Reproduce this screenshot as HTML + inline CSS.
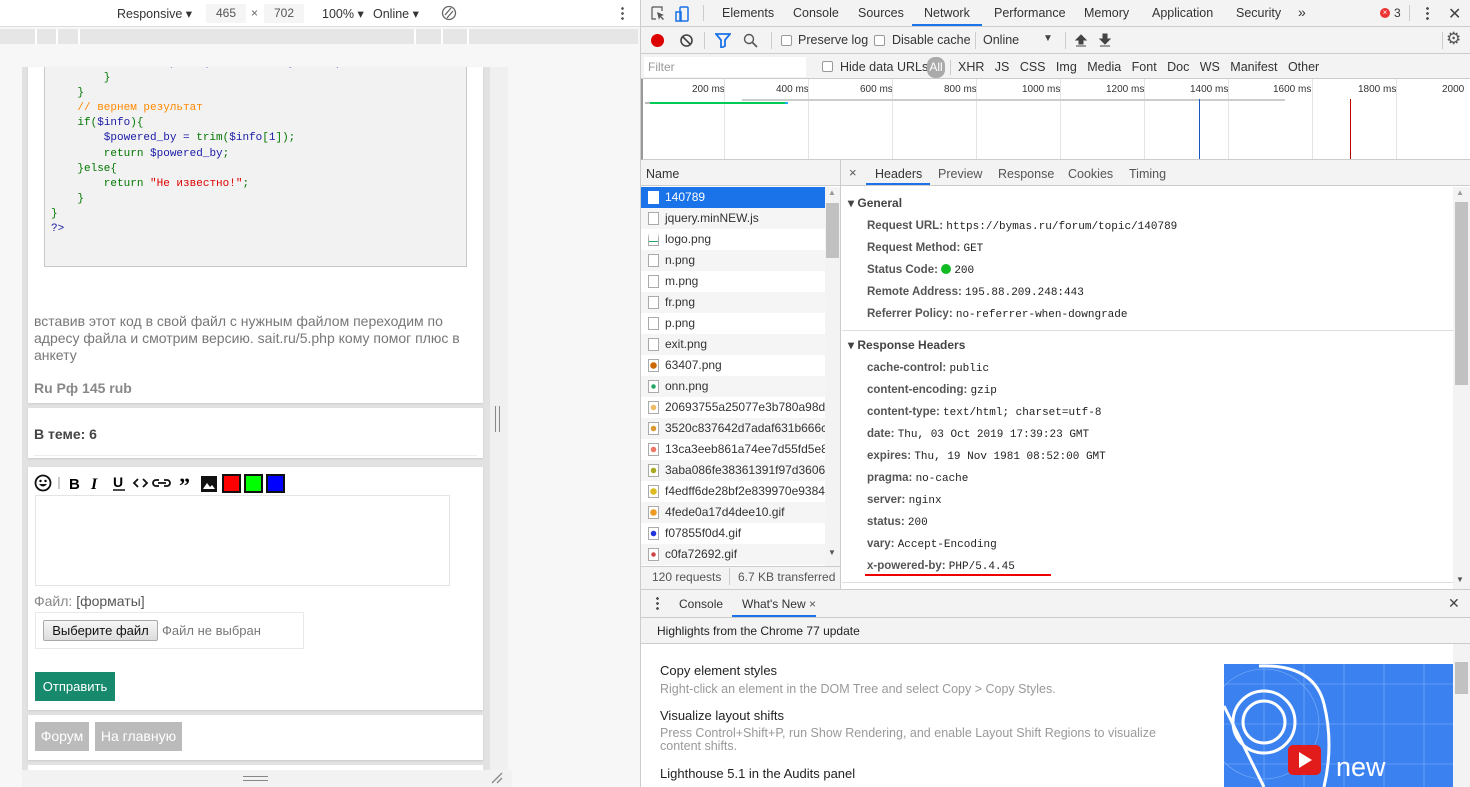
<!DOCTYPE html>
<html><head><meta charset="utf-8"><style>
*{box-sizing:border-box;margin:0;padding:0}
body{width:1470px;height:787px;overflow:hidden;position:relative;font-family:"Liberation Sans","Noto Sans CJK SC",sans-serif;font-size:12px;color:#333;background:#fff}
.a{position:absolute;white-space:nowrap}
.m{font-family:"Liberation Mono",monospace}
.row{position:absolute;left:641px;width:184px;height:21px;line-height:21px;padding-left:24px;font-size:12px;color:#333}
.row i{position:absolute;left:7px;top:4px;width:11px;height:13px;border:1px solid #aaa;background:#fff}
.hd{position:absolute;left:867px;font-size:11.5px;color:#444;white-space:nowrap}
.hd b{color:#555;font-weight:bold}
.hd span{font-family:"Liberation Mono",monospace;color:#222;font-size:11px}
</style></head><body>
<!-- LEFT PANE -->
<div class="a" style="left:0;top:0;width:640px;height:787px;background:#f7f7f7"></div>
<div class="a" style="left:0;top:0;width:640px;height:27px;background:#fff;border-bottom:1px solid #ddd"></div>
<div class="a" style="left:117px;top:6px;font-size:12.5px;color:#333">Responsive ▾</div>
<div class="a" style="left:206px;top:4px;width:40px;height:19px;background:#f5f5f5;text-align:center;line-height:19px;color:#555">465</div>
<div class="a" style="left:251px;top:6px;color:#666">×</div>
<div class="a" style="left:264px;top:4px;width:40px;height:19px;background:#f5f5f5;text-align:center;line-height:19px;color:#555">702</div>
<div class="a" style="left:322px;top:6px;font-size:12.5px">100% ▾</div>
<div class="a" style="left:373px;top:6px;font-size:12.5px">Online ▾</div>
<svg class="a" style="left:441px;top:5px" width="16" height="16"><circle cx="8" cy="8" r="6.5" fill="none" stroke="#666" stroke-width="1.3"/><path d="M4 10 L10 3 M6 13 L12 6" stroke="#666" stroke-width="1.3"/></svg>
<div class="a" style="left:621px;top:6px;width:3px;height:15px;background:radial-gradient(circle,#666 1.3px,transparent 1.5px) 0 0/3px 5px"></div>
<div class="a" style="left:0;top:29px;width:638px;height:15px;background:#e6e6e6"></div>
<div class="a" style="left:35px;top:29px;width:2px;height:15px;background:#fff"></div>
<div class="a" style="left:56px;top:29px;width:2px;height:15px;background:#fff"></div>
<div class="a" style="left:78px;top:29px;width:2px;height:15px;background:#fff"></div>
<div class="a" style="left:414px;top:29px;width:2px;height:15px;background:#fff"></div>
<div class="a" style="left:441px;top:29px;width:2px;height:15px;background:#fff"></div>
<div class="a" style="left:467px;top:29px;width:2px;height:15px;background:#fff"></div>
<!-- device frame -->
<div class="a" style="left:22px;top:67px;width:468px;height:703px;background:#e2e2e2"></div>
<div class="a" style="left:490px;top:67px;width:18px;height:703px;background:#f0f0f0"></div>
<div class="a" style="left:28px;top:67px;width:455px;height:336px;background:#fff;box-shadow:0 1px 2px #ccc"></div>
<div class="a" style="left:44px;top:67px;width:423px;height:200px;background:#f2f2f2;border:1px solid #c8c8c8;border-top:none;overflow:hidden">
<div class="a m" style="left:6px;top:-11px;font-size:11px;line-height:15.1px;color:#1a1aa6;white-space:pre"><span style="color:#1a1aa6">        $info = explode("X-Powered-By: ",$v);</span>
<span style="color:#070">        }</span>
<span style="color:#070">    }</span>
<span style="color:#f80">    // вернем результат</span>
<span style="color:#070">    if(</span>$info<span style="color:#070">){</span>
        $powered_by = <span style="color:#070">trim(</span>$info<span style="color:#070">[</span>1<span style="color:#070">]);</span>
<span style="color:#070">        return </span>$powered_by<span style="color:#070">;</span>
<span style="color:#070">    }else{</span>
<span style="color:#070">        return </span><span style="color:#d00">"Не известно!"</span><span style="color:#070">;</span>
<span style="color:#070">    }</span>
<span style="color:#070">}</span>
?&gt;</div></div>
<div class="a" style="left:34px;top:313px;font-size:14px;line-height:17px;color:#777;white-space:normal;width:440px">вставив этот код в свой файл с нужным файлом переходим по адресу файла и смотрим версию. sait.ru/5.php кому помог плюс в анкету</div>
<div class="a" style="left:34px;top:380px;font-size:14px;font-weight:bold;color:#888">Ru Рф 145 rub</div>
<div class="a" style="left:28px;top:408px;width:455px;height:50px;background:#fff;box-shadow:0 1px 2px #ccc"></div>
<div class="a" style="left:34px;top:426px;font-size:14px;font-weight:bold;color:#444">В теме: 6</div>
<div class="a" style="left:34px;top:455px;width:443px;height:1px;background:#eee"></div>
<div class="a" style="left:28px;top:467px;width:455px;height:243px;background:#fff;box-shadow:0 1px 2px #ccc"></div>
<svg class="a" style="left:34px;top:473px" width="260" height="20">
<circle cx="9" cy="10" r="7.5" fill="none" stroke="#111" stroke-width="1.8"/><circle cx="6.5" cy="8" r="1.2"/><circle cx="11.5" cy="8" r="1.2"/><path d="M5 11 Q9 16 13 11Z" fill="#111"/>
<line x1="25" y1="4" x2="25" y2="16" stroke="#999"/>
<text x="35" y="16" font-family="Liberation Sans" font-weight="bold" font-size="15">B</text>
<text x="57" y="16" font-family="Liberation Serif" font-style="italic" font-weight="bold" font-size="16">I</text>
<text x="79" y="14" font-family="Liberation Sans" font-weight="bold" font-size="14">U</text><line x1="79" y1="17" x2="91" y2="17" stroke="#111" stroke-width="1.5"/>
<path d="M104 6 L100 10 L104 14 M109 6 L113 10 L109 14" fill="none" stroke="#111" stroke-width="1.8"/>
<path d="M125 7 h-3 a3 3 0 0 0 0 6 h3 M130 7 h3 a3 3 0 0 1 0 6 h-3 M124 10 h8" fill="none" stroke="#111" stroke-width="1.8"/>
<text x="145" y="20" font-family="Liberation Serif" font-weight="bold" font-size="22">”</text>
<rect x="167" y="3" width="16" height="16" fill="#111"/><path d="M169 16 L173 10 L176 14 L178 12 L181 16Z" fill="#fff"/>
<rect x="189" y="2" width="17" height="17" fill="#f00" stroke="#111" stroke-width="2"/>
<rect x="211" y="2" width="17" height="17" fill="#0f0" stroke="#111" stroke-width="2"/>
<rect x="233" y="2" width="17" height="17" fill="#00f" stroke="#111" stroke-width="2"/>
</svg>
<div class="a" style="left:35px;top:495px;width:415px;height:91px;border:1px solid #e4e4e4"></div>
<div class="a" style="left:34px;top:593px;font-size:14px;color:#888">Файл: <span style="color:#555">[форматы]</span></div>
<div class="a" style="left:35px;top:612px;width:269px;height:37px;border:1px solid #e8e8e8"></div>
<div class="a" style="left:43px;top:620px;width:115px;height:21px;border:1px solid #aaa;border-radius:2px;background:linear-gradient(#f6f6f6,#ddd);font-size:13px;line-height:19px;text-align:center;color:#111">Выберите файл</div>
<div class="a" style="left:162px;top:623px;font-size:13px;color:#777">Файл не выбран</div>
<div class="a" style="left:35px;top:672px;width:80px;height:29px;background:#178a6e;color:#fff;font-size:13px;line-height:29px;text-align:center">Отправить</div>
<div class="a" style="left:28px;top:715px;width:455px;height:45px;background:#fff;box-shadow:0 1px 2px #ccc"></div>
<div class="a" style="left:35px;top:722px;width:54px;height:29px;background:#bbb;color:#fff;font-size:14px;line-height:29px;text-align:center">Форум</div>
<div class="a" style="left:95px;top:722px;width:87px;height:29px;background:#bbb;color:#fff;font-size:14px;line-height:29px;text-align:center">На главную</div>
<div class="a" style="left:28px;top:765px;width:455px;height:5px;background:#fff"></div>
<div class="a" style="left:22px;top:770px;width:490px;height:17px;background:#f2f2f2"></div>
<div class="a" style="left:243px;top:776px;width:25px;height:5px;border-top:1.5px solid #888;border-bottom:1.5px solid #888"></div>
<div class="a" style="left:495px;top:406px;width:5px;height:26px;border-left:1.5px solid #888;border-right:1.5px solid #888"></div>
<svg class="a" style="left:491px;top:772px" width="12" height="12"><path d="M1 11 L11 1 M6 11 L11 6" stroke="#888" stroke-width="1.3"/></svg>
<!-- divider -->
<div class="a" style="left:640px;top:0;width:1px;height:787px;background:#ccc"></div>
<!-- RIGHT PANE: tabs -->
<div class="a" style="left:641px;top:0;width:829px;height:27px;background:#f3f3f3;border-bottom:1px solid #ccc"></div>
<svg class="a" style="left:650px;top:5px" width="40" height="18"><path d="M2 2 h10 v4 M2 2 v12 h4" fill="none" stroke="#555" stroke-width="1.2"/><path d="M7 7 l7 3 -3 1 3 3 -1 1 -3 -3 -1 3z" fill="#555"/><rect x="30" y="2" width="8" height="14" rx="1" fill="none" stroke="#1a73e8" stroke-width="1.5"/><rect x="26" y="7" width="5" height="9" fill="none" stroke="#1a73e8" stroke-width="1.5"/></svg>
<div class="a" style="left:703px;top:5px;width:1px;height:16px;background:#ccc"></div>
<div class="a" style="left:722px;top:6px;font-size:12.5px;color:#333">Elements</div>
<div class="a" style="left:793px;top:6px;font-size:12.5px;color:#333">Console</div>
<div class="a" style="left:858px;top:6px;font-size:12.5px;color:#333">Sources</div>
<div class="a" style="left:924px;top:6px;font-size:12.5px;color:#333">Network</div>
<div class="a" style="left:912px;top:24px;width:70px;height:2px;background:#1a73e8"></div>
<div class="a" style="left:994px;top:6px;font-size:12.5px;color:#333">Performance</div>
<div class="a" style="left:1084px;top:6px;font-size:12.5px;color:#333">Memory</div>
<div class="a" style="left:1152px;top:6px;font-size:12.5px;color:#333">Application</div>
<div class="a" style="left:1236px;top:6px;font-size:12.5px;color:#333">Security</div>
<div class="a" style="left:1298px;top:4px;font-size:14px;color:#333">»</div>
<div class="a" style="left:1380px;top:8px;width:10px;height:10px;border-radius:50%;background:#e33;color:#fff;font-size:8px;line-height:10px;text-align:center">×</div>
<div class="a" style="left:1394px;top:6px;font-size:12px">3</div>
<div class="a" style="left:1409px;top:5px;width:1px;height:16px;background:#ccc"></div>
<div class="a" style="left:1426px;top:6px;width:3px;height:15px;background:radial-gradient(circle,#555 1.3px,transparent 1.5px) 0 0/3px 5px"></div>
<div class="a" style="left:1448px;top:4px;font-size:16px;color:#444">✕</div>
<!-- toolbar2 -->
<div class="a" style="left:641px;top:27px;width:829px;height:27px;background:#f3f3f3;border-bottom:1px solid #ccc"></div>
<div class="a" style="left:651px;top:34px;width:13px;height:13px;border-radius:50%;background:#d00"></div>
<svg class="a" style="left:679px;top:33px" width="15" height="15"><circle cx="7.5" cy="7.5" r="5.5" fill="none" stroke="#444" stroke-width="1.6"/><path d="M4 4 L11 11" stroke="#444" stroke-width="1.6"/></svg>
<div class="a" style="left:704px;top:32px;width:1px;height:17px;background:#ccc"></div>
<svg class="a" style="left:715px;top:33px" width="16" height="15"><path d="M1 1 h14 l-5 6 v6 l-4 2 v-8z" fill="none" stroke="#1a73e8" stroke-width="1.8"/></svg>
<svg class="a" style="left:743px;top:33px" width="15" height="15"><circle cx="6" cy="6" r="4.5" fill="none" stroke="#555" stroke-width="1.4"/><path d="M9.5 9.5 L14 14" stroke="#555" stroke-width="1.6"/></svg>
<div class="a" style="left:771px;top:32px;width:1px;height:17px;background:#ccc"></div>
<div class="a" style="left:781px;top:35px;width:11px;height:11px;border:1px solid #999;border-radius:2px;background:#fff"></div>
<div class="a" style="left:798px;top:33px;font-size:12.5px">Preserve log</div>
<div class="a" style="left:874px;top:35px;width:11px;height:11px;border:1px solid #999;border-radius:2px;background:#fff"></div>
<div class="a" style="left:892px;top:33px;font-size:12.5px">Disable cache</div>
<div class="a" style="left:975px;top:32px;width:1px;height:17px;background:#ccc"></div>
<div class="a" style="left:983px;top:33px;font-size:12.5px">Online</div>
<div class="a" style="left:1043px;top:33px;font-size:10px;color:#444">▼</div>
<div class="a" style="left:1065px;top:32px;width:1px;height:17px;background:#ccc"></div>
<svg class="a" style="left:1074px;top:32px" width="40" height="16"><path d="M7 3 l-5 5 h3 v4 h4 v-4 h3z M2 14 h10" fill="#444" stroke="#444" stroke-width="1"/><path d="M35 12 l-5 -5 h3 v-5 h4 v5 h3z M30 14 h10" transform="translate(-4 0)" fill="#444" stroke="#444" stroke-width="1"/></svg>
<div class="a" style="left:1442px;top:32px;width:1px;height:17px;background:#ccc"></div>
<div class="a" style="left:1446px;top:29px;font-size:17px;color:#555">⚙</div>
<!-- filter row -->
<div class="a" style="left:641px;top:54px;width:829px;height:25px;background:#f3f3f3;border-bottom:1px solid #ccc"></div>
<div class="a" style="left:644px;top:57px;width:162px;height:20px;background:#fff;font-size:12px;color:#999;padding:3px 4px">Filter</div>
<div class="a" style="left:822px;top:61px;width:11px;height:11px;border:1px solid #999;border-radius:2px;background:#fff"></div>
<div class="a" style="left:840px;top:60px;font-size:12.5px">Hide data URLs</div>
<div class="a" style="left:927px;top:57px;width:18px;height:21px;border-radius:8px;background:#aaa;color:#fff;font-size:12px;line-height:21px;text-align:center">All</div>
<div class="a" style="left:950px;top:60px;width:1px;height:15px;background:#ccc"></div>
<div class="a" style="left:958px;top:60px;font-size:12.5px;word-spacing:0">XHR&nbsp;&nbsp; JS&nbsp;&nbsp; CSS&nbsp;&nbsp; Img&nbsp;&nbsp; Media&nbsp;&nbsp; Font&nbsp;&nbsp; Doc&nbsp;&nbsp; WS&nbsp;&nbsp; Manifest&nbsp;&nbsp; Other</div>
<!-- timeline -->
<div class="a" style="left:641px;top:79px;width:829px;height:81px;background:#fff;border-bottom:1px solid #ccc;border-left:2px solid #999"></div>
<div class="a" style="left:692px;top:84px;font-size:10px;color:#333">200 ms</div>
<div class="a" style="left:776px;top:84px;font-size:10px;color:#333">400 ms</div>
<div class="a" style="left:860px;top:84px;font-size:10px;color:#333">600 ms</div>
<div class="a" style="left:944px;top:84px;font-size:10px;color:#333">800 ms</div>
<div class="a" style="left:1022px;top:84px;font-size:10px;color:#333">1000 ms</div>
<div class="a" style="left:1106px;top:84px;font-size:10px;color:#333">1200 ms</div>
<div class="a" style="left:1190px;top:84px;font-size:10px;color:#333">1400 ms</div>
<div class="a" style="left:1273px;top:84px;font-size:10px;color:#333">1600 ms</div>
<div class="a" style="left:1358px;top:84px;font-size:10px;color:#333">1800 ms</div>
<div class="a" style="left:1442px;top:84px;font-size:10px;color:#333">2000</div>
<div class="a" style="left:724px;top:79px;width:1px;height:80px;background:#e4e4e4"></div>
<div class="a" style="left:808px;top:79px;width:1px;height:80px;background:#e4e4e4"></div>
<div class="a" style="left:892px;top:79px;width:1px;height:80px;background:#e4e4e4"></div>
<div class="a" style="left:976px;top:79px;width:1px;height:80px;background:#e4e4e4"></div>
<div class="a" style="left:1060px;top:79px;width:1px;height:80px;background:#e4e4e4"></div>
<div class="a" style="left:1144px;top:79px;width:1px;height:80px;background:#e4e4e4"></div>
<div class="a" style="left:1228px;top:79px;width:1px;height:80px;background:#e4e4e4"></div>
<div class="a" style="left:1312px;top:79px;width:1px;height:80px;background:#e4e4e4"></div>
<div class="a" style="left:1396px;top:79px;width:1px;height:80px;background:#e4e4e4"></div>
<div class="a" style="left:645px;top:102px;width:5px;height:2px;background:#bbb"></div>
<div class="a" style="left:650px;top:102px;width:135px;height:2px;background:#0c5"></div>
<div class="a" style="left:785px;top:102px;width:3px;height:2px;background:#2af"></div>
<div class="a" style="left:742px;top:99px;width:543px;height:2px;background:#ccc"></div>
<div class="a" style="left:1199px;top:99px;width:1px;height:60px;background:#1558c0"></div>
<div class="a" style="left:1350px;top:99px;width:1px;height:60px;background:#b00"></div>
<!-- name header / detail tabs -->
<div class="a" style="left:641px;top:160px;width:829px;height:26px;background:#f3f3f3;border-bottom:1px solid #ccc"></div>
<div class="a" style="left:646px;top:167px;font-size:12.5px">Name</div>
<div class="a" style="left:840px;top:160px;width:1px;height:430px;background:#ccc"></div>
<div class="a" style="left:849px;top:165px;font-size:13px;color:#555">×</div>
<div class="a" style="left:875px;top:167px;font-size:12.5px">Headers</div>
<div class="a" style="left:866px;top:183px;width:64px;height:2px;background:#1a73e8"></div>
<div class="a" style="left:938px;top:167px;font-size:12.5px;color:#555">Preview</div>
<div class="a" style="left:998px;top:167px;font-size:12.5px;color:#555">Response</div>
<div class="a" style="left:1068px;top:167px;font-size:12.5px;color:#555">Cookies</div>
<div class="a" style="left:1129px;top:167px;font-size:12.5px;color:#555">Timing</div>
<!-- request list -->
<div class="a" style="left:641px;top:187px;width:184px;height:379px;background:repeating-linear-gradient(#fff 0 21px,#f5f5f5 21px 42px)"></div>
<div class="row" style="top:187px;background:#1a73e8;color:#fff"><i style="border-color:#fff"></i>140789</div>
<div class="row" style="top:208px"><i></i>jquery.minNEW.js</div>
<div class="row" style="top:229px"><i style="border-top:5px solid #fff;background:linear-gradient(#fff 40%,#2a6 40%,#2a6 60%,#fff 60%)"></i>logo.png</div>
<div class="row" style="top:250px"><i></i>n.png</div>
<div class="row" style="top:271px"><i></i>m.png</div>
<div class="row" style="top:292px"><i></i>fr.png</div>
<div class="row" style="top:313px"><i></i>p.png</div>
<div class="row" style="top:334px"><i></i>exit.png</div>
<div class="row" style="top:355px"><i style="background:radial-gradient(circle,#c60 3px,#fff 3.5px)"></i>63407.png</div>
<div class="row" style="top:376px"><i style="background:radial-gradient(circle,#2a6 2px,#fff 2.5px)"></i>onn.png</div>
<div class="row" style="top:397px;overflow:hidden"><i style="background:radial-gradient(circle,#eb6 2.5px,#fff 3px)"></i>20693755a25077e3b780a98d0</div>
<div class="row" style="top:418px;overflow:hidden"><i style="background:radial-gradient(circle,#d93 2.5px,#fff 3px)"></i>3520c837642d7adaf631b666c</div>
<div class="row" style="top:439px;overflow:hidden"><i style="background:radial-gradient(circle,#e76 2.5px,#fff 3px)"></i>13ca3eeb861a74ee7d55fd5e8</div>
<div class="row" style="top:460px;overflow:hidden"><i style="background:radial-gradient(circle,#aa2 2.5px,#fff 3px)"></i>3aba086fe38361391f97d3606e</div>
<div class="row" style="top:481px;overflow:hidden"><i style="background:radial-gradient(circle,#db2 3px,#fff 3.5px)"></i>f4edff6de28bf2e839970e9384</div>
<div class="row" style="top:502px"><i style="background:radial-gradient(circle,#e92 3px,#fff 3.5px)"></i>4fede0a17d4dee10.gif</div>
<div class="row" style="top:523px"><i style="background:radial-gradient(circle,#23d 2.5px,#fff 3px)"></i>f07855f0d4.gif</div>
<div class="row" style="top:544px"><i style="background:radial-gradient(circle,#c44 2px,#fff 2.5px)"></i>c0fa72692.gif</div>
<div class="a" style="left:825px;top:187px;width:15px;height:379px;background:#f3f3f3"></div>
<div class="a" style="left:826px;top:203px;width:13px;height:55px;background:#c1c1c1"></div>
<div class="a" style="left:828px;top:188px;font-size:8px;color:#999">▲</div>
<div class="a" style="left:828px;top:548px;font-size:8px;color:#555">▼</div>
<div class="a" style="left:641px;top:566px;width:199px;height:23px;background:#f3f3f3;border-top:1px solid #ccc"></div>
<div class="a" style="left:652px;top:570px;font-size:12px;color:#555">120 requests</div>
<div class="a" style="left:729px;top:568px;width:1px;height:17px;background:#ccc"></div>
<div class="a" style="left:738px;top:570px;font-size:12px;color:#555">6.7 KB transferred</div>
<!-- headers detail -->
<div class="a" style="left:848px;top:196px;font-size:12px;font-weight:bold;color:#444">▾ General</div>
<div class="hd" style="top:220px"><b>Request URL:</b> <span>https://bymas.ru/forum/topic/140789</span></div>
<div class="hd" style="top:242px"><b>Request Method:</b> <span>GET</span></div>
<div class="hd" style="top:264px"><b>Status Code:</b> <span style="display:inline-block;width:10px;height:10px;border-radius:50%;background:#1b2;vertical-align:-1px"></span> <span>200</span></div>
<div class="hd" style="top:286px"><b>Remote Address:</b> <span>195.88.209.248:443</span></div>
<div class="hd" style="top:308px"><b>Referrer Policy:</b> <span>no-referrer-when-downgrade</span></div>
<div class="a" style="left:842px;top:330px;width:611px;height:1px;background:#ddd"></div>
<div class="a" style="left:848px;top:338px;font-size:12px;font-weight:bold;color:#444">▾ Response Headers</div>
<div class="hd" style="top:362px"><b>cache-control:</b> <span>public</span></div>
<div class="hd" style="top:384px"><b>content-encoding:</b> <span>gzip</span></div>
<div class="hd" style="top:406px"><b>content-type:</b> <span>text/html; charset=utf-8</span></div>
<div class="hd" style="top:428px"><b>date:</b> <span>Thu, 03 Oct 2019 17:39:23 GMT</span></div>
<div class="hd" style="top:450px"><b>expires:</b> <span>Thu, 19 Nov 1981 08:52:00 GMT</span></div>
<div class="hd" style="top:472px"><b>pragma:</b> <span>no-cache</span></div>
<div class="hd" style="top:494px"><b>server:</b> <span>nginx</span></div>
<div class="hd" style="top:516px"><b>status:</b> <span>200</span></div>
<div class="hd" style="top:538px"><b>vary:</b> <span>Accept-Encoding</span></div>
<div class="hd" style="top:560px"><b>x-powered-by:</b> <span>PHP/5.4.45</span></div>
<div class="a" style="left:865px;top:574px;width:186px;height:2px;background:#e00"></div>
<div class="a" style="left:842px;top:582px;width:611px;height:1px;background:#ddd"></div>
<div class="a" style="left:1453px;top:187px;width:17px;height:402px;background:#f3f3f3"></div>
<div class="a" style="left:1455px;top:202px;width:13px;height:183px;background:#c1c1c1"></div>
<div class="a" style="left:1456px;top:188px;font-size:8px;color:#999">▲</div>
<div class="a" style="left:1456px;top:575px;font-size:8px;color:#555">▼</div>
<!-- drawer -->
<div class="a" style="left:641px;top:589px;width:829px;height:29px;background:#f3f3f3;border-top:1px solid #ccc;border-bottom:1px solid #ccc"></div>
<div class="a" style="left:656px;top:596px;width:3px;height:15px;background:radial-gradient(circle,#555 1.3px,transparent 1.5px) 0 0/3px 5px"></div>
<div class="a" style="left:679px;top:597px;font-size:12px;color:#333">Console</div>
<div class="a" style="left:742px;top:597px;font-size:12px;color:#333">What's New <span style="color:#555">×</span></div>
<div class="a" style="left:732px;top:615px;width:84px;height:2px;background:#1a73e8"></div>
<div class="a" style="left:1448px;top:595px;font-size:14px;color:#444">✕</div>
<div class="a" style="left:641px;top:618px;width:829px;height:26px;background:#f3f3f3;border-bottom:1px solid #ccc"></div>
<div class="a" style="left:657px;top:624px;font-size:12px;color:#222">Highlights from the Chrome 77 update</div>
<div class="a" style="left:660px;top:663px;font-size:13px;color:#222">Copy element styles</div>
<div class="a" style="left:660px;top:682px;font-size:12.5px;color:#999">Right-click an element in the DOM Tree and select Copy &gt; Copy Styles.</div>
<div class="a" style="left:660px;top:708px;font-size:13px;color:#222">Visualize layout shifts</div>
<div class="a" style="left:660px;top:727px;font-size:12.5px;color:#999;white-space:normal;width:520px;line-height:13px">Press Control+Shift+P, run Show Rendering, and enable Layout Shift Regions to visualize content shifts.</div>
<div class="a" style="left:660px;top:766px;font-size:13px;color:#222">Lighthouse 5.1 in the Audits panel</div>
<svg class="a" style="left:1224px;top:664px" width="229" height="123"><rect width="229" height="123" fill="#3b82f0"/><g stroke="#7fb0f8" stroke-width="0.6" fill="none"><path d="M0 20 H229 M0 60 H229 M0 100 H229 M40 0 V123 M80 0 V123 M120 0 V123 M160 0 V123 M200 0 V123"/><circle cx="40" cy="60" r="55"/></g><g stroke="#fff" stroke-width="3" fill="none"><circle cx="40" cy="58" r="31"/><circle cx="40" cy="58" r="21"/><path d="M0 42 L40 123 M35 2 Q90 0 100 40 Q110 80 100 123"/></g><rect x="64" y="81" width="33" height="30" rx="5" fill="#e21b1b"/><path d="M75 88 L88 96 L75 104Z" fill="#fff"/><text x="112" y="112" font-family="Liberation Sans" font-size="27" fill="#fff">new</text></svg>
<div class="a" style="left:1453px;top:644px;width:17px;height:143px;background:#f3f3f3"></div>
<div class="a" style="left:1455px;top:662px;width:13px;height:32px;background:#c1c1c1"></div>
</body></html>
